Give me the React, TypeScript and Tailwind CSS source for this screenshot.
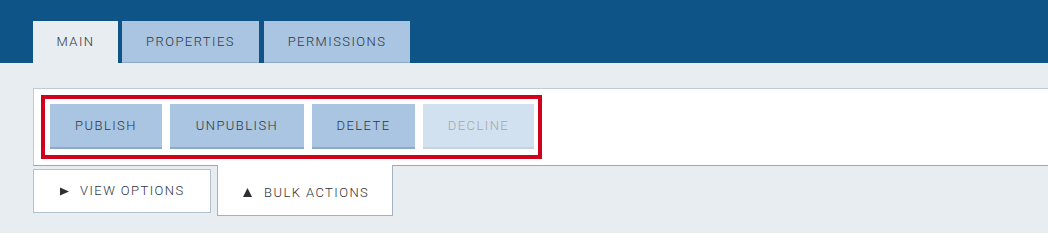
const headerTabs = [
  { label: 'MAIN', cls: 'w-[85px] bg-[#e8edf1]' },
  { label: 'PROPERTIES', cls: 'ml-[4px] w-[137px] bg-[#a9c5e2] border-b border-[#8eaacb]' },
  { label: 'PERMISSIONS', cls: 'ml-[5px] w-[146px] bg-[#a9c5e2] border-b border-[#8eaacb]' },
];

const actions = [
  { label: 'PUBLISH', w: 'w-[112px]', disabled: false },
  { label: 'UNPUBLISH', w: 'w-[134px]', disabled: false },
  { label: 'DELETE', w: 'w-[103px]', disabled: false },
  { label: 'DECLINE', w: 'w-[111px]', disabled: true },
];

export default function App() {
  return (
    <div className="w-[1048px] h-[233px] bg-[#e8edf1] font-['Roboto','Liberation_Sans',sans-serif] font-light text-[13px] tracking-[0.11em] text-[#2f3540] overflow-hidden">
      {/* top bar with tabs */}
      <div className="h-[63px] bg-[#0e5486] flex items-end pl-[33px]">
        {headerTabs.map(t => (
          <div key={t.label} className={`${t.cls} h-[42px] flex items-center justify-center`}>
            {t.label}
          </div>
        ))}
      </div>

      {/* actions panel */}
      <div className="ml-[33px] mt-[25px] bg-white border-t border-l border-t-[#bccbd8] border-l-[#bccbd8] border-b border-b-[#9ba7b3] pl-[7px] pt-[6px] pb-[6px]">
        <div className="w-[501px] border-4 border-[#d0021b] pl-[5px] pt-[5px] pr-[4px] pb-[6px] flex gap-[8px]">
          {actions.map(a => (
            <button
              key={a.label}
              className={
                a.disabled
                  ? `${a.w} h-[45px] bg-[#d2e1ef] border-b-2 border-[#c3d3e2] text-[#a3a7ab] flex items-center justify-center tracking-[0.11em]`
                  : `${a.w} h-[45px] bg-[#a9c5e2] border-b-2 border-[#8eaacb] text-[#2f3540] flex items-center justify-center tracking-[0.11em]`
              }
            >
              {a.label}
            </button>
          ))}
        </div>
      </div>

      {/* bottom toggles */}
      <div className="ml-[33px] flex items-start">
        <div className="mt-[3px] w-[178px] h-[44px] bg-white border border-[#b4c2cf] flex items-center pl-[26px] gap-[11px]">
          <svg width="9" height="9" viewBox="0 0 9 9" className="shrink-0">
            <path d="M0 0.5 L9 4.5 L0 8.5 Z" fill="#2d2f33" />
          </svg>
          <span>VIEW OPTIONS</span>
        </div>
        <div className="-mt-px ml-[6px] w-[176px] h-[51px] bg-white border-x border-b border-[#a3b2c1] flex items-center pl-[25px] pt-[5px] gap-[12px]">
          <svg width="9" height="9" viewBox="0 0 9 9" className="shrink-0">
            <path d="M4.5 0 L9 9 L0 9 Z" fill="#2d2f33" />
          </svg>
          <span>BULK ACTIONS</span>
        </div>
      </div>
    </div>
  );
}
